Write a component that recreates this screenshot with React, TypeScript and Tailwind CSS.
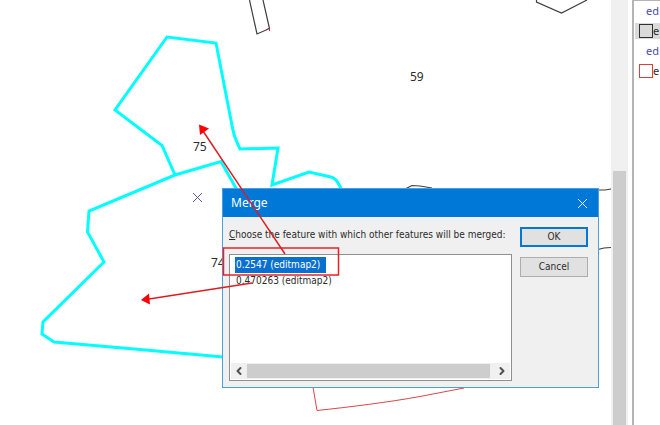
import { useState } from "react";
import { ChevronLeft, ChevronRight } from "lucide-react";

interface Feature {
  id: string;
  label: string;
}

interface LayerRow {
  id: string;
  name: string;
  kind: "source" | "black" | "red";
}

const features: Feature[] = [
  { id: "f1", label: "0.2547 (editmap2)" },
  { id: "f2", label: "0.470263 (editmap2)" },
];

const layers: LayerRow[] = [
  { id: "l1", name: "ed", kind: "source" },
  { id: "l2", name: "e", kind: "black" },
  { id: "l3", name: "ed", kind: "source" },
  { id: "l4", name: "e", kind: "red" },
];

function MapCanvas() {
  return (
    <svg className="absolute inset-0 h-full w-full" fill="none" aria-label="Map">
      {/* Unselected parcels */}
      <g stroke="#3f3f3f" strokeWidth="1.200">
        <path d="M249.500 0L257 34L269.500 28.500L263 0" />
        <path d="M536.500 0V2L561.500 13L587 0" />
        <path d="M405 189L412 185.500L420 186L432 188" />
        <path d="M598 190H605L611 189" />
        <path d="M598 249.500L604 248L611 247.500" />
      </g>
      <path d="M269.500 31V28L266 30" stroke="#b03040" />
      <path d="M313 387L317 410.500C350 407 390 402 420 396.500L464 388" stroke="#d9474c" />

      {/* Selected parcels */}
      <g stroke="#00ffff" strokeWidth="3" strokeLinejoin="miter">
        <path d="M175 175L162 145.500L115 110L167 37L216 43L232.500 128C234 138 237 142 240 149L278 148L272 185L309 172L331 177C336 178 338 183 342 190" />
        <path d="M300 363L223 357L140 349.500L54 342L42 334L43 322L104 262L87.500 232L89 211L175 175L221 161.500L237 190" />
      </g>

      <path d="M193 193L202 202M202 193L193 202" stroke="#5656a8" />
      <g fill="#2b2b2b" className="font-['Noto_Sans',sans-serif] text-[12px]">
        <text x="193" y="151">75</text>
        <text x="410" y="81">59</text>
        <text x="211" y="267">74</text>
      </g>
    </svg>
  );
}

function Annotations() {
  return (
    <svg className="pointer-events-none absolute inset-0 h-full w-full" fill="none" aria-hidden="true">
      <rect x="223.500" y="248" width="115" height="27" stroke="#e8202a" strokeWidth="1.500" />
      <path d="M285 254L203 131" stroke="#e01b22" strokeWidth="1.500" />
      <path d="M199 124.500L209 128.500L200 135Z" fill="#ff0000" />
      <path d="M252 283L149 299" stroke="#e01b22" strokeWidth="1.500" />
      <path d="M141 300L149 293.500L150 304.500Z" fill="#ff0000" />
    </svg>
  );
}

function MergeDialog() {
  const [selected, setSelected] = useState("f1");
  const [open, setOpen] = useState(true);

  if (!open) return null;

  return (
    <div
      role="dialog"
      aria-labelledby="merge-title"
      className="absolute top-[188px] left-[222px] w-[377px] border border-[#4a9fe0] bg-[#f0f0f0] font-['DejaVu_Sans_Condensed','DejaVu_Sans',sans-serif]"
    >
      <div className="flex h-7 items-center justify-between bg-[#0078d7] pr-2.5 pl-2 text-white">
        <h1 id="merge-title" className="font-['Noto_Sans',sans-serif] text-[12px]">Merge</h1>
        <button aria-label="Close" onClick={() => setOpen(false)}>
          <svg width="11" height="11" stroke="currentColor" fill="none">
            <path d="M1 1L10 10M10 1L1 10" />
          </svg>
        </button>
      </div>

      <div className="flex gap-2 pt-2.5 pr-2.5 pb-1.5 pl-1.5">
        <div className="min-w-0 flex-1">
          <p id="merge-label" className="text-[10px] leading-4 whitespace-nowrap">
            <u>C</u>hoose the feature with which other features will be merged:
          </p>
          <div className="mt-[11px] flex h-[127px] flex-col justify-between border border-[#8f8f8f] bg-white px-px pt-0.5 pb-px">
            <div role="listbox" aria-labelledby="merge-label" className="flex flex-col items-start pl-1">
              {features.map((f) => (
                <button
                  key={f.id}
                  role="option"
                  aria-selected={selected === f.id}
                  onClick={() => setSelected(f.id)}
                  className={`h-4 pr-1.5 pl-px text-[10px] leading-4 ${
                    selected === f.id ? "bg-[#0a70d0] text-white" : "text-[#2b2b2b]"
                  }`}
                >
                  {f.label}
                </button>
              ))}
            </div>
            <div className="flex h-4 items-center bg-[#f0f0f0]">
              <button aria-label="Scroll left" className="flex w-4 justify-center text-[#505050]">
                <ChevronLeft size={12} strokeWidth={4} />
              </button>
              <div className="h-3.5 flex-1 bg-[#cdcdcd]" />
              <button aria-label="Scroll right" className="flex w-5 justify-center pl-1 text-[#505050]">
                <ChevronRight size={12} strokeWidth={4} />
              </button>
            </div>
          </div>
        </div>

        <div className="flex w-[68px] flex-col gap-2.5 text-[10px]">
          <button onClick={() => setOpen(false)} className="h-5 border-2 border-[#0078d7] bg-[#e1e1e1] leading-4">
            OK
          </button>
          <button onClick={() => setOpen(false)} className="h-5 border border-[#adadad] bg-[#e1e1e1] leading-4">
            Cancel
          </button>
        </div>
      </div>
    </div>
  );
}

function LayerPanel() {
  return (
    <aside className="w-7 overflow-hidden border-t border-l-2 border-[#b4b4b4] bg-white">
      <ul>
        {layers.map((l) => (
          <li key={l.id} className="flex h-5 items-center">
            {l.kind === "source" ? (
              <span className="pl-3 text-[11px] text-[#4a4aa8]">{l.name}</span>
            ) : (
              <span className={`ml-px flex h-4 flex-1 items-center pl-1 text-[11px] ${l.kind === "black" ? "bg-[#dadada]" : ""}`}>
                <i className={`size-3.5 shrink-0 border ${l.kind === "black" ? "border-[#303030]" : "border-[#e03c40]"}`} />
                {l.name}
              </span>
            )}
          </li>
        ))}
      </ul>
    </aside>
  );
}

export default function App() {
  return (
    <main className="relative flex h-screen overflow-hidden bg-white font-['Noto_Sans',sans-serif] text-[#2b2b2b]">
      <section className="relative min-w-0 flex-1">
        <MapCanvas />
        <MergeDialog />
        <Annotations />
      </section>
      <div className="mr-1 flex w-[17px] flex-col bg-[#f0f0f0] px-0.5">
        <div className="mt-[171px] flex-1 bg-[#cdcdcd]" />
      </div>
      <LayerPanel />
    </main>
  );
}
